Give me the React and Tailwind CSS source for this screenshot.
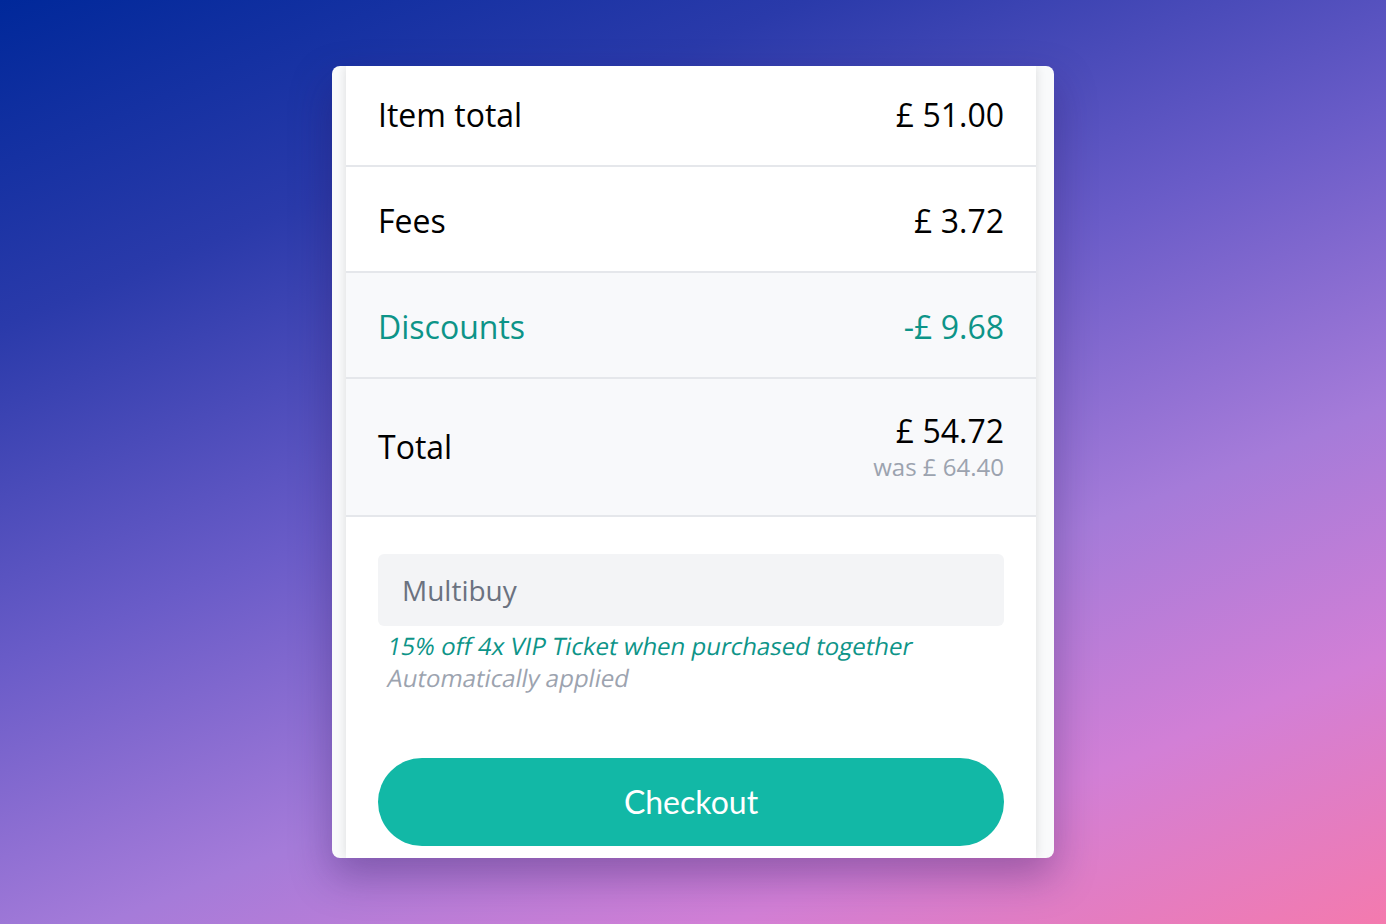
export default function App() {
  const sans = { fontFamily: '"Open Sans", "Noto Sans", sans-serif' };
  return (
    <div
      className="w-[1386px] h-[924px] overflow-hidden pt-[66px] bg-[linear-gradient(158deg,#00289a_0%,#2a3aaa_22%,#6a5cc8_45%,#a57bd9_65%,#d27fd6_82%,#f47aae_100%)]"
      style={sans}
    >
      <div className="mx-auto w-[722px] h-[792px] overflow-hidden rounded-lg bg-[#f9fafb] shadow-[0_18px_40px_rgba(40,20,90,0.35)]">
        <div className="ml-[14px] w-[690px] h-full bg-white shadow-[0_0_10px_rgba(0,0,0,0.12)]">
          <div className="flex h-[101px] items-center justify-between border-b-2 border-[#e5e7eb] px-8 pb-[2px] text-[32px] text-black">
            <span>Item total</span>
            <span>£ 51.00</span>
          </div>
          <div className="flex h-[106px] items-center justify-between border-b-2 border-[#e5e7eb] px-8 pt-[3px] text-[32px] text-black">
            <span>Fees</span>
            <span>£ 3.72</span>
          </div>
          <div className="flex h-[106px] items-center justify-between border-b-2 border-[#e5e7eb] bg-[#f8f9fb] px-8 pt-[3px] text-[32px] text-[#0d9488]">
            <span>Discounts</span>
            <span>-£ 9.68</span>
          </div>
          <div className="flex h-[138px] items-center justify-between border-b-2 border-[#e5e7eb] bg-[#f8f9fb] px-8 text-black">
            <span className="text-[32px]">Total</span>
            <div className="flex flex-col items-end">
              <span className="text-[32px] leading-[40px]">£ 54.72</span>
              <span className="text-[24px] leading-[32px] text-[#9ca3af]">was £ 64.40</span>
            </div>
          </div>
          <div className="px-8 pt-[37px]">
            <div className="flex h-[72px] items-center rounded-md bg-[#f3f4f6] pl-6 text-[28px] text-[#6b7280]">
              Multibuy
            </div>
            <div className="mt-1 pl-[7px] text-[24px] leading-[32px]">
              <div className="origin-bottom-left -skew-x-[11deg] text-[#0d9488]">15% off 4x VIP Ticket when purchased together</div>
              <div className="origin-bottom-left -skew-x-[11deg] text-[#9ca3af]">Automatically applied</div>
            </div>
            <button
              className="mt-16 flex h-[88px] w-full items-center justify-center rounded-full bg-[#12b8a6] text-[32px] text-white"
              style={{ fontFamily: 'Lato, "Noto Sans", sans-serif' }}
            >
              Checkout
            </button>
          </div>
        </div>
      </div>
    </div>
  );
}
